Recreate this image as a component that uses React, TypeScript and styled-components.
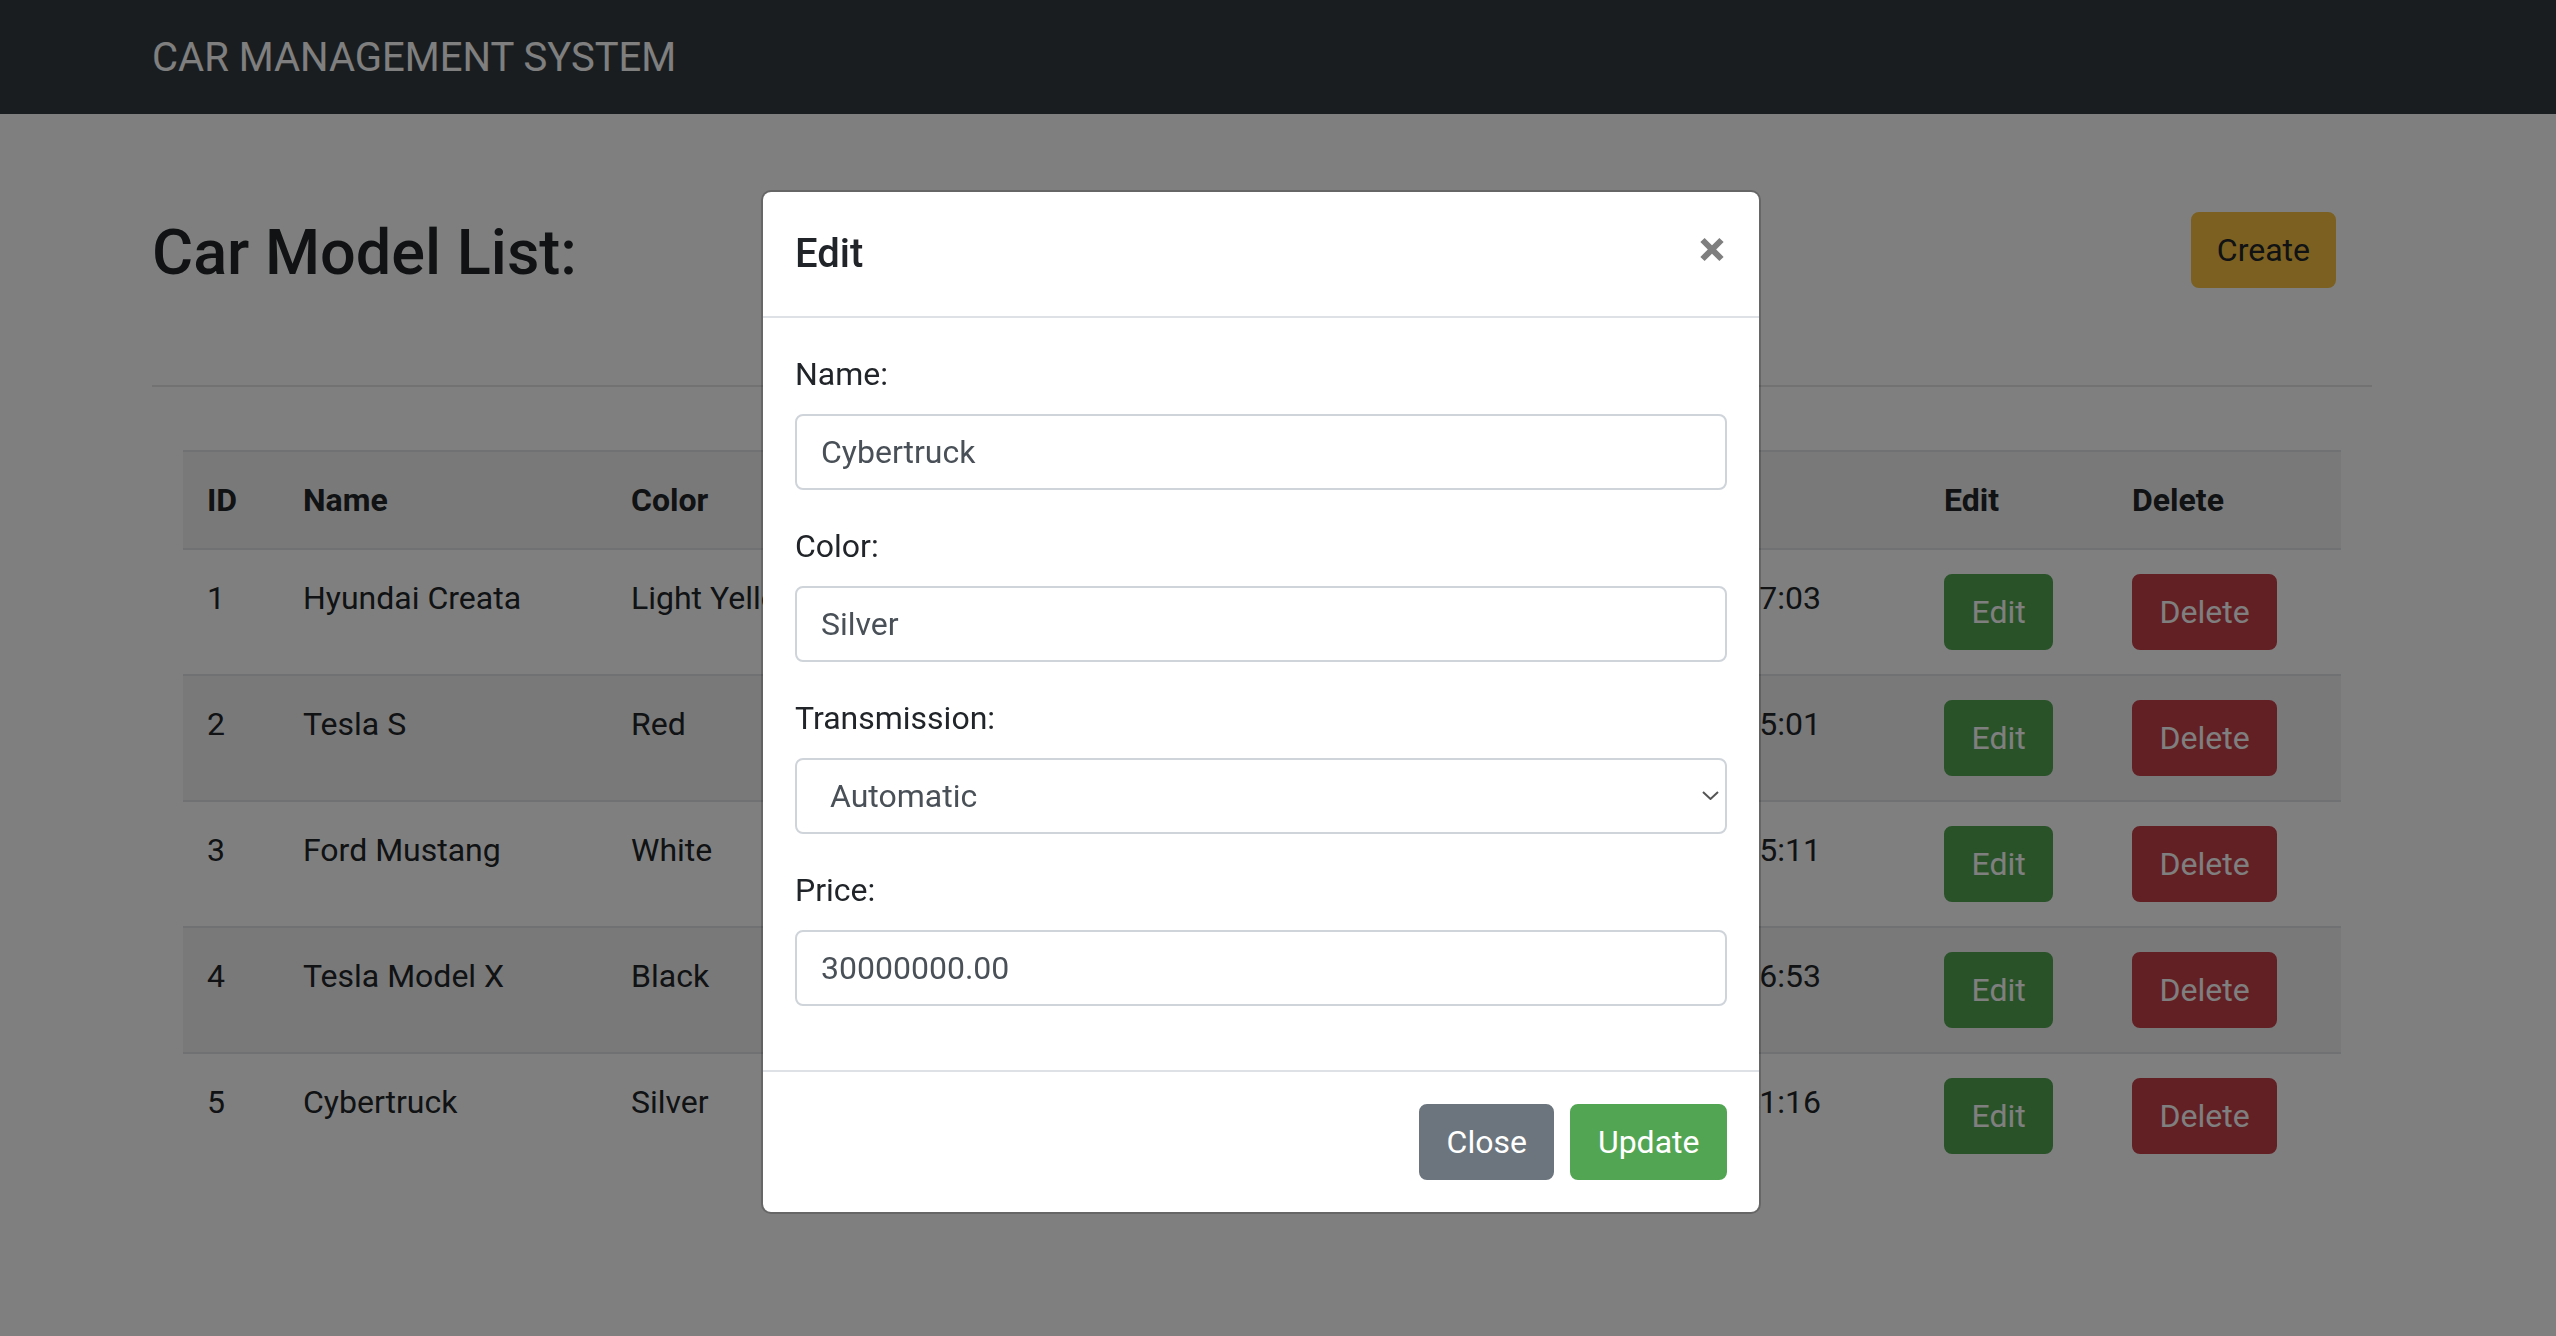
import React from "react";
import styled, { createGlobalStyle } from "styled-components";

const GlobalStyle = createGlobalStyle`
  *, *::before, *::after { box-sizing: border-box; }
  html, body { margin: 0; padding: 0; }
  body {
    font-family: Roboto, "Liberation Sans", Arial, sans-serif;
    font-size: 32px;
    line-height: 1.5;
    color: #212529;
    background: #ffffff;
    min-height: 1336px;
  }
`;

type Variant = "success" | "danger" | "warning" | "secondary";

const palette: Record<Variant, { bg: string; fg: string }> = {
  success: { bg: "#52a552", fg: "#ffffff" },
  danger: { bg: "#c64048", fg: "#ffffff" },
  warning: { bg: "#f6c042", fg: "#212529" },
  secondary: { bg: "#6c757d", fg: "#ffffff" },
};

const Button = styled.button<{ $variant: Variant }>`
  display: inline-block;
  font-family: inherit;
  font-size: 32px;
  line-height: 48px;
  font-weight: 400;
  padding: 12px 24px;
  border: 2px solid ${(p) => palette[p.$variant].bg};
  border-radius: 8px;
  background: ${(p) => palette[p.$variant].bg};
  color: ${(p) => palette[p.$variant].fg};
  cursor: pointer;
  white-space: nowrap;
`;

const Navbar = styled.nav`
  display: flex;
  align-items: center;
  background: #343a40;
  padding: 18px 152px 16px;
`;

const Brand = styled.a`
  color: #ffffff;
  font-size: 40px;
  line-height: 60px;
  padding: 10px 0;
  text-decoration: none;
`;

const Main = styled.main`
  width: 2220px;
  margin-left: 152px;
  padding-top: 100px;
`;

const TitleRow = styled.div`
  display: flex;
  align-items: flex-start;
  justify-content: space-between;
`;

const Title = styled.h2`
  margin: 0;
  font-size: 63px;
  line-height: 77px;
  font-weight: 500;
`;

const CreateButton = styled(Button)`
  margin: -2px 36px 0 0;
`;

const Divider = styled.hr`
  margin: 94px 0 63px;
  border: 0;
  border-top: 2px solid rgba(0, 0, 0, 0.1);
`;

const Table = styled.table`
  width: 2158px;
  margin-left: 31px;
  border-collapse: separate;
  border-spacing: 0;
  table-layout: fixed;
`;

const Col = styled.col<{ $w: number }>`
  width: ${(p) => p.$w}px;
`;

const Row = styled.tr<{ $striped?: boolean }>`
  background: ${(p) => (p.$striped ? "rgba(0, 0, 0, 0.05)" : "transparent")};
`;

const HeadCell = styled.th`
  text-align: left;
  font-weight: 700;
  padding: 24px;
  border-top: 2px solid #dee2e6;
  vertical-align: top;
  white-space: nowrap;
  overflow: hidden;
`;

const Cell = styled.td`
  padding: 24px;
  border-top: 2px solid #dee2e6;
  vertical-align: top;
  white-space: nowrap;
  overflow: hidden;
`;

const RowButton = styled(Button)`
  padding: 12px 25.5px;
`;

const Backdrop = styled.div`
  position: fixed;
  inset: 0;
  background: rgba(0, 0, 0, 0.5);
`;

const ModalLayer = styled.div`
  position: fixed;
  inset: 0;
  overflow: hidden;
`;

const Dialog = styled.div`
  display: flex;
  flex-direction: column;
  width: 1000px;
  margin: 190px 0 0 761px;
  background: #ffffff;
  background-clip: padding-box;
  border: 2px solid rgba(0, 0, 0, 0.2);
  border-radius: 10px;
`;

const ModalHeader = styled.div`
  display: flex;
  align-items: flex-start;
  justify-content: space-between;
  padding: 32px;
  border-bottom: 2px solid #dee2e6;
`;

const ModalTitle = styled.h5`
  margin: 0;
  font-size: 40px;
  line-height: 60px;
  font-weight: 500;
`;

const CloseButton = styled.button`
  display: flex;
  padding: 0;
  margin: 13px 2px 0 0;
  border: 0;
  background: transparent;
  cursor: pointer;
`;

const ModalBody = styled.div`
  padding: 32px;
`;

const FormGroup = styled.div`
  margin-bottom: 32px;
`;

const Label = styled.label`
  display: block;
  margin-bottom: 16px;
  font-size: 32px;
  line-height: 48px;
`;

const Input = styled.input`
  display: block;
  width: 100%;
  height: 76px;
  padding: 12px 24px;
  font-family: inherit;
  font-size: 32px;
  line-height: 48px;
  color: #495057;
  background: #ffffff;
  border: 2px solid #ced4da;
  border-radius: 8px;
  outline: none;
`;

const SelectWrap = styled.div`
  position: relative;
`;

const Select = styled.select`
  display: block;
  width: 100%;
  height: 76px;
  padding: 12px 48px 12px 33px;
  font-family: inherit;
  font-size: 32px;
  line-height: 48px;
  color: #495057;
  background: #ffffff;
  border: 2px solid #ced4da;
  border-radius: 8px;
  appearance: none;
  -webkit-appearance: none;
  outline: none;
`;

const Chevron = styled.svg`
  position: absolute;
  right: 8px;
  top: 33px;
  pointer-events: none;
`;

const ModalFooter = styled.div`
  display: flex;
  align-items: center;
  justify-content: flex-end;
  padding: 24px;
  border-top: 2px solid #dee2e6;
`;

const FooterButton = styled(Button)`
  margin: 8px;
  padding: 12px 25.5px;
`;

const cars = [
  { id: 1, name: "Hyundai Creata", color: "Light Yellow", transmission: "Automatic", price: "25000000.00", date: "2023-12-08 10:17:03" },
  { id: 2, name: "Tesla S", color: "Red", transmission: "Automatic", price: "80000000.00", date: "2023-12-08 10:25:01" },
  { id: 3, name: "Ford Mustang", color: "White", transmission: "Manual", price: "45000000.00", date: "2023-12-08 10:35:11" },
  { id: 4, name: "Tesla Model X", color: "Black", transmission: "Automatic", price: "95000000.00", date: "2023-12-08 10:36:53" },
  { id: 5, name: "Cybertruck", color: "Silver", transmission: "Automatic", price: "30000000.00", date: "2023-12-08 10:41:16" },
];

export default function App() {
  return (
    <>
      <GlobalStyle />
      <Navbar>
        <Brand href="#">CAR MANAGEMENT SYSTEM</Brand>
      </Navbar>
      <Main>
        <TitleRow>
          <Title>Car Model List:</Title>
          <CreateButton $variant="warning">Create</CreateButton>
        </TitleRow>
        <Divider />
        <Table>
          <colgroup>
            <Col $w={96} />
            <Col $w={328} />
            <Col $w={300} />
            <Col $w={277} />
            <Col $w={320} />
            <Col $w={416} />
            <Col $w={188} />
            <Col $w={233} />
          </colgroup>
          <tbody>
            <Row $striped>
              <HeadCell>ID</HeadCell>
              <HeadCell>Name</HeadCell>
              <HeadCell>Color</HeadCell>
              <HeadCell>Transmission</HeadCell>
              <HeadCell>Price</HeadCell>
              <HeadCell>Created At</HeadCell>
              <HeadCell>Edit</HeadCell>
              <HeadCell>Delete</HeadCell>
            </Row>
            {cars.map((c, i) => (
              <Row key={c.id} $striped={i % 2 === 1}>
                <Cell>{c.id}</Cell>
                <Cell>{c.name}</Cell>
                <Cell>{c.color}</Cell>
                <Cell>{c.transmission}</Cell>
                <Cell>{c.price}</Cell>
                <Cell>{c.date}</Cell>
                <Cell>
                  <RowButton $variant="success">Edit</RowButton>
                </Cell>
                <Cell>
                  <RowButton $variant="danger">Delete</RowButton>
                </Cell>
              </Row>
            ))}
          </tbody>
        </Table>
      </Main>

      <Backdrop />
      <ModalLayer>
        <Dialog role="dialog" aria-modal="true">
          <ModalHeader>
            <ModalTitle>Edit</ModalTitle>
            <CloseButton aria-label="Close">
              <svg width="26" height="25" viewBox="0 0 26 25">
                <path d="M3.5 3 L22.5 22 M22.5 3 L3.5 22" stroke="#7f7f7f" strokeWidth="6" fill="none" />
              </svg>
            </CloseButton>
          </ModalHeader>
          <ModalBody>
            <FormGroup>
              <Label>Name:</Label>
              <Input defaultValue="Cybertruck" />
            </FormGroup>
            <FormGroup>
              <Label>Color:</Label>
              <Input defaultValue="Silver" />
            </FormGroup>
            <FormGroup>
              <Label>Transmission:</Label>
              <SelectWrap>
                <Select defaultValue="Automatic">
                  <option>Automatic</option>
                  <option>Manual</option>
                </Select>
                <Chevron width="17" height="9" viewBox="0 0 17 9">
                  <path d="M1 1 L8.5 8 L16 1" stroke="#555" strokeWidth="2" fill="none" />
                </Chevron>
              </SelectWrap>
            </FormGroup>
            <FormGroup>
              <Label>Price:</Label>
              <Input defaultValue="30000000.00" />
            </FormGroup>
          </ModalBody>
          <ModalFooter>
            <FooterButton $variant="secondary">Close</FooterButton>
            <FooterButton $variant="success">Update</FooterButton>
          </ModalFooter>
        </Dialog>
      </ModalLayer>
    </>
  );
}
